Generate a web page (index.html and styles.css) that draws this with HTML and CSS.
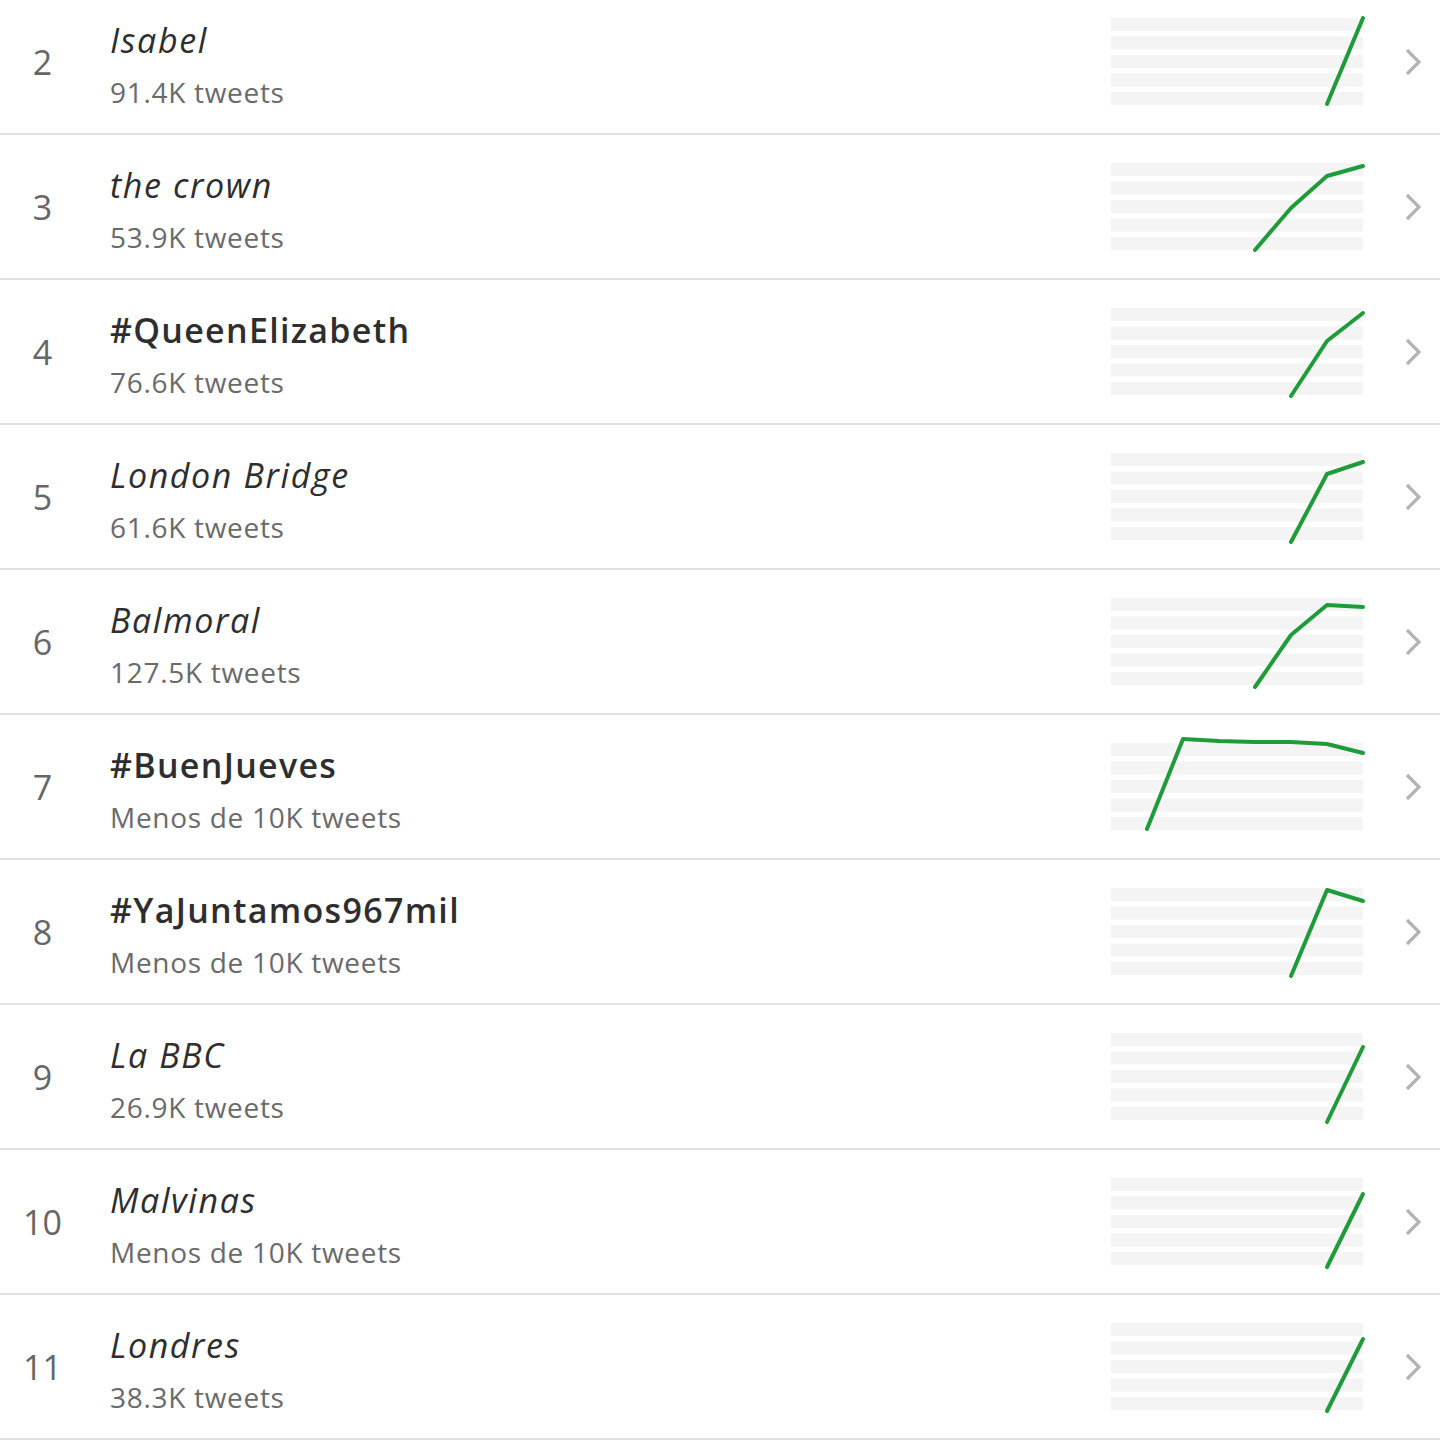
FILE: index.html
```html
<!DOCTYPE html>
<html lang="es">
<head>
<meta charset="utf-8">
<title>Tendencias</title>
<link rel="stylesheet" href="styles.css">
</head>
<body>
<ul class="trends">
  <li class="row">
    <span class="rank">2</span>
    <div class="info"><div class="title italic">Isabel</div><div class="count">91.4K tweets</div></div>
    <svg class="chart" viewBox="0 0 252 87"><g class="bands"><rect y="0" width="252" height="13"/><rect y="18.5" width="252" height="13"/><rect y="37" width="252" height="13"/><rect y="55.5" width="252" height="13"/><rect y="74" width="252" height="13"/></g><polyline points="216,86 252,0"/></svg>
    <svg class="chev" viewBox="0 0 16 28"><path d="M2 2 L14 14 L2 26"/></svg>
  </li>
  <li class="row">
    <span class="rank">3</span>
    <div class="info"><div class="title italic">the crown</div><div class="count">53.9K tweets</div></div>
    <svg class="chart" viewBox="0 0 252 87"><g class="bands"><rect y="0" width="252" height="13"/><rect y="18.5" width="252" height="13"/><rect y="37" width="252" height="13"/><rect y="55.5" width="252" height="13"/><rect y="74" width="252" height="13"/></g><polyline points="144,87 180,45 216,13 252,3"/></svg>
    <svg class="chev" viewBox="0 0 16 28"><path d="M2 2 L14 14 L2 26"/></svg>
  </li>
  <li class="row">
    <span class="rank">4</span>
    <div class="info"><div class="title tag">#QueenElizabeth</div><div class="count">76.6K tweets</div></div>
    <svg class="chart" viewBox="0 0 252 87"><g class="bands"><rect y="0" width="252" height="13"/><rect y="18.5" width="252" height="13"/><rect y="37" width="252" height="13"/><rect y="55.5" width="252" height="13"/><rect y="74" width="252" height="13"/></g><polyline points="180,88 216,33 252,5"/></svg>
    <svg class="chev" viewBox="0 0 16 28"><path d="M2 2 L14 14 L2 26"/></svg>
  </li>
  <li class="row">
    <span class="rank">5</span>
    <div class="info"><div class="title italic">London Bridge</div><div class="count">61.6K tweets</div></div>
    <svg class="chart" viewBox="0 0 252 87"><g class="bands"><rect y="0" width="252" height="13"/><rect y="18.5" width="252" height="13"/><rect y="37" width="252" height="13"/><rect y="55.5" width="252" height="13"/><rect y="74" width="252" height="13"/></g><polyline points="180,89 216,21 252,9"/></svg>
    <svg class="chev" viewBox="0 0 16 28"><path d="M2 2 L14 14 L2 26"/></svg>
  </li>
  <li class="row">
    <span class="rank">6</span>
    <div class="info"><div class="title italic">Balmoral</div><div class="count">127.5K tweets</div></div>
    <svg class="chart" viewBox="0 0 252 87"><g class="bands"><rect y="0" width="252" height="13"/><rect y="18.5" width="252" height="13"/><rect y="37" width="252" height="13"/><rect y="55.5" width="252" height="13"/><rect y="74" width="252" height="13"/></g><polyline points="144,89 180,37 216,7 252,9"/></svg>
    <svg class="chev" viewBox="0 0 16 28"><path d="M2 2 L14 14 L2 26"/></svg>
  </li>
  <li class="row">
    <span class="rank">7</span>
    <div class="info"><div class="title tag">#BuenJueves</div><div class="count">Menos de 10K tweets</div></div>
    <svg class="chart" viewBox="0 0 252 87"><g class="bands"><rect y="0" width="252" height="13"/><rect y="18.5" width="252" height="13"/><rect y="37" width="252" height="13"/><rect y="55.5" width="252" height="13"/><rect y="74" width="252" height="13"/></g><polyline points="36,86 72,-4 108,-2 144,-1 180,-1 216,1 252,10"/></svg>
    <svg class="chev" viewBox="0 0 16 28"><path d="M2 2 L14 14 L2 26"/></svg>
  </li>
  <li class="row">
    <span class="rank">8</span>
    <div class="info"><div class="title tag">#YaJuntamos967mil</div><div class="count">Menos de 10K tweets</div></div>
    <svg class="chart" viewBox="0 0 252 87"><g class="bands"><rect y="0" width="252" height="13"/><rect y="18.5" width="252" height="13"/><rect y="37" width="252" height="13"/><rect y="55.5" width="252" height="13"/><rect y="74" width="252" height="13"/></g><polyline points="180,88 216,2 252,13"/></svg>
    <svg class="chev" viewBox="0 0 16 28"><path d="M2 2 L14 14 L2 26"/></svg>
  </li>
  <li class="row">
    <span class="rank">9</span>
    <div class="info"><div class="title italic">La BBC</div><div class="count">26.9K tweets</div></div>
    <svg class="chart" viewBox="0 0 252 87"><g class="bands"><rect y="0" width="252" height="13"/><rect y="18.5" width="252" height="13"/><rect y="37" width="252" height="13"/><rect y="55.5" width="252" height="13"/><rect y="74" width="252" height="13"/></g><polyline points="216,89 252,14"/></svg>
    <svg class="chev" viewBox="0 0 16 28"><path d="M2 2 L14 14 L2 26"/></svg>
  </li>
  <li class="row">
    <span class="rank">10</span>
    <div class="info"><div class="title italic">Malvinas</div><div class="count">Menos de 10K tweets</div></div>
    <svg class="chart" viewBox="0 0 252 87"><g class="bands"><rect y="0" width="252" height="13"/><rect y="18.5" width="252" height="13"/><rect y="37" width="252" height="13"/><rect y="55.5" width="252" height="13"/><rect y="74" width="252" height="13"/></g><polyline points="216,89 252,16"/></svg>
    <svg class="chev" viewBox="0 0 16 28"><path d="M2 2 L14 14 L2 26"/></svg>
  </li>
  <li class="row">
    <span class="rank">11</span>
    <div class="info"><div class="title italic">Londres</div><div class="count">38.3K tweets</div></div>
    <svg class="chart" viewBox="0 0 252 87"><g class="bands"><rect y="0" width="252" height="13"/><rect y="18.5" width="252" height="13"/><rect y="37" width="252" height="13"/><rect y="55.5" width="252" height="13"/><rect y="74" width="252" height="13"/></g><polyline points="216,88 252,16"/></svg>
    <svg class="chev" viewBox="0 0 16 28"><path d="M2 2 L14 14 L2 26"/></svg>
  </li>
</ul>
</body>
</html>
```
FILE: styles.css
```css
html, body {
  margin: 0;
  padding: 0;
  background: #ffffff;
  overflow: hidden;
}
body {
  font-family: "Open Sans", "Noto Sans", "Liberation Sans", sans-serif;
  color: #333;
}
.trends {
  list-style: none;
  margin: -10px 0 0 0;
  padding: 0;
}
.row {
  display: flex;
  align-items: center;
  height: 143px;
  border-bottom: 2px solid #e2e2e2;
}
.rank {
  width: 85px;
  flex: none;
  text-align: center;
  font-size: 34px;
  color: #666;
}
.info {
  flex: 1;
  margin-left: 25px;
  padding-top: 8px;
  min-width: 0;
}
.title {
  font-size: 34px;
  line-height: 48px;
  color: #2e2e2e;
  white-space: nowrap;
}
.title.italic {
  font-style: italic;
  letter-spacing: 1.6px;
}
.title.tag {
  font-weight: 600;
  letter-spacing: 1.3px;
}
.count {
  margin-top: 4px;
  font-size: 28px;
  line-height: 48px;
  letter-spacing: 0.7px;
  color: #6a6a6a;
  white-space: nowrap;
}
.chart {
  flex: none;
  width: 252px;
  height: 87px;
  overflow: visible;
}
.bands rect {
  fill: #f4f4f4;
}
.chart polyline {
  fill: none;
  stroke: #1f9b3a;
  stroke-width: 4;
  stroke-linejoin: round;
  stroke-linecap: round;
}
.chev {
  flex: none;
  width: 16px;
  height: 28px;
  margin-left: 42px;
  margin-right: 19px;
}
.chev path {
  fill: none;
  stroke: #b3b3b3;
  stroke-width: 3.2;
}
```
